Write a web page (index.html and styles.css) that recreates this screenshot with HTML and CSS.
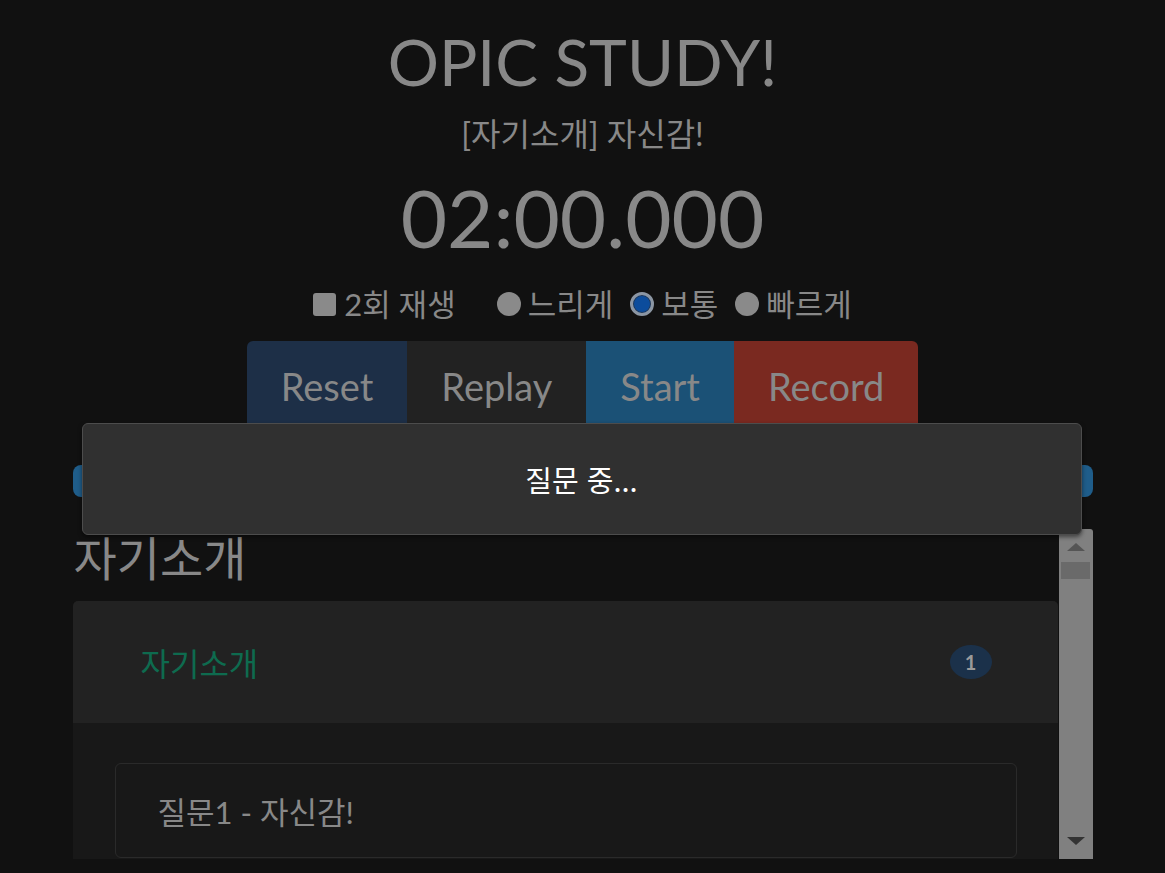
FILE: index.html
```html
<!DOCTYPE html>
<html lang="ko">
<head>
<meta charset="utf-8">
<title>OPIC STUDY!</title>
<link rel="stylesheet" href="styles.css">
</head>
<body>
<main class="page">
  <h1 class="title">OPIC STUDY!</h1>
  <p class="subtitle">[자기소개] 자신감!</p>
  <div class="timer">02:00.000</div>
  <div class="options">
    <label class="opt opt-check"><span class="box"></span>2회 재생</label>
    <label class="opt"><span class="radio"></span>느리게</label>
    <label class="opt"><span class="radio checked"></span>보통</label>
    <label class="opt"><span class="radio"></span>빠르게</label>
  </div>
  <div class="buttons">
    <button class="btn btn-reset">Reset</button>
    <button class="btn btn-replay">Replay</button>
    <button class="btn btn-start">Start</button>
    <button class="btn btn-record">Record</button>
  </div>
  <div class="progress"></div>
  <div class="scroller">
    <div class="scroll-content">
      <h2 class="section">자기소개</h2>
      <div class="card">
        <div class="card-head">
          <span class="card-title">자기소개</span>
          <span class="badge">1</span>
        </div>
        <div class="card-body">
          <div class="item">질문1 - 자신감!</div>
        </div>
      </div>
    </div>
    <div class="scrollbar">
      <span class="arrow up"></span>
      <span class="thumb"></span>
      <span class="track"></span>
      <span class="arrow down"></span>
    </div>
  </div>
</main>
<div class="modal">질문 중...</div>
</body>
</html>
```
FILE: styles.css
```css
* { box-sizing: border-box; }
html, body { margin: 0; padding: 0; }
body {
  background: #111;
  color: #888;
  font-family: Lato, "Noto Sans CJK KR", sans-serif;
  height: 873px;
  overflow: hidden;
}
.page {
  width: 1020px;
  margin: 0 auto;
  display: flex;
  flex-direction: column;
  align-items: center;
}
.title {
  margin: 23px 0 0;
  font-size: 64px;
  line-height: 77px;
  font-weight: 400;
}
.subtitle {
  margin: 11px 0 0;
  font-size: 32px;
  line-height: 46px;
}
.timer {
  margin-top: 12px;
  font-size: 80px;
  line-height: 96px;
}
.options {
  margin-top: 16px;
  display: flex;
  align-items: center;
  font-size: 31px;
  line-height: 46px;
  gap: 17px;
}
.opt { display: flex; align-items: center; gap: 7px; }
.opt-check { margin-right: 24px; gap: 8px; }
.box {
  width: 23px; height: 23px;
  background: #8a8a8a;
  border-radius: 3px;
}
.radio {
  width: 24px; height: 24px;
  border-radius: 50%;
  background: #8a8a8a;
}
.radio.checked {
  background: #0c4c9c;
  border: 3px solid #8c96a3;
  box-shadow: inset 0 0 0 1px #233650;
}
.buttons {
  margin-top: 14px;
  display: flex;
}
.btn {
  border: 0;
  font-family: Lato, sans-serif;
  font-size: 38px;
  line-height: 54px;
  padding: 18px 34px;
  color: #888;
}
.btn-reset { background: #1d2f47; border-top-left-radius: 6px; }
.btn-replay { background: #222; }
.btn-start { background: #1b5176; }
.btn-record { background: #7a2920; border-top-right-radius: 6px; }
.progress {
  margin-top: 34px;
  width: 1020px;
  height: 32px;
  border-radius: 8px;
  background: #1f5d8a;
}
.scroller {
  margin-top: 32px;
  width: 1020px;
  height: 330px;
  display: flex;
  overflow: hidden;
}
.scroll-content {
  flex: 1;
  overflow: hidden;
}
.section {
  margin: 1px 0 0 1px;
  font-size: 47px;
  line-height: 56px;
  font-weight: 400;
}
.card {
  margin-top: 15px;
  margin-right: 1px;
  border-radius: 5px;
  background: #181818;
  overflow: hidden;
}
.card-head {
  height: 122px;
  background: #222;
  display: flex;
  align-items: center;
  justify-content: space-between;
  padding: 0 66px 0 68px;
}
.card-title {
  font-size: 32px;
  color: #0e6b4f;
}
.badge {
  width: 42px; height: 34px;
  border-radius: 50%;
  background: #1b314a;
  color: #9a9a9a;
  font-weight: 700;
  font-size: 20px;
  display: flex;
  align-items: center;
  justify-content: center;
}
.card-body {
  padding: 40px 41px 40px 42px;
  display: flex;
  flex-direction: column;
  gap: 20px;
}
.item {
  height: 95px;
  border: 1px solid #2a2a2a;
  border-radius: 6px;
  padding: 0 42px;
  display: flex;
  align-items: center;
  font-size: 31px;
}
.scrollbar {
  width: 34px;
  background: #808080;
  border-top-right-radius: 3px;
  display: flex;
  flex-direction: column;
  align-items: center;
  padding: 14px 0 14px;
}
.arrow {
  width: 0; height: 0;
  border-left: 9px solid transparent;
  border-right: 9px solid transparent;
}
.arrow.up { border-bottom: 8px solid #555; }
.arrow.down { border-top: 8px solid #333; }
.thumb {
  margin-top: 11px;
  width: 29px;
  height: 17px;
  background: #6a6a6a;
}
.track { flex: 1; }
.modal {
  position: absolute;
  top: 423px;
  left: 50%;
  margin-left: -501px;
  width: 1000px;
  height: 112px;
  background: #303030;
  border: 1px solid #4c4c4c;
  border-radius: 6px;
  box-shadow: 0 2px 4px rgba(0,0,0,0.5);
  color: #fff;
  font-family: "Noto Sans CJK KR", Lato, sans-serif;
  font-size: 29px;
  display: flex;
  align-items: center;
  justify-content: center;
}
```
